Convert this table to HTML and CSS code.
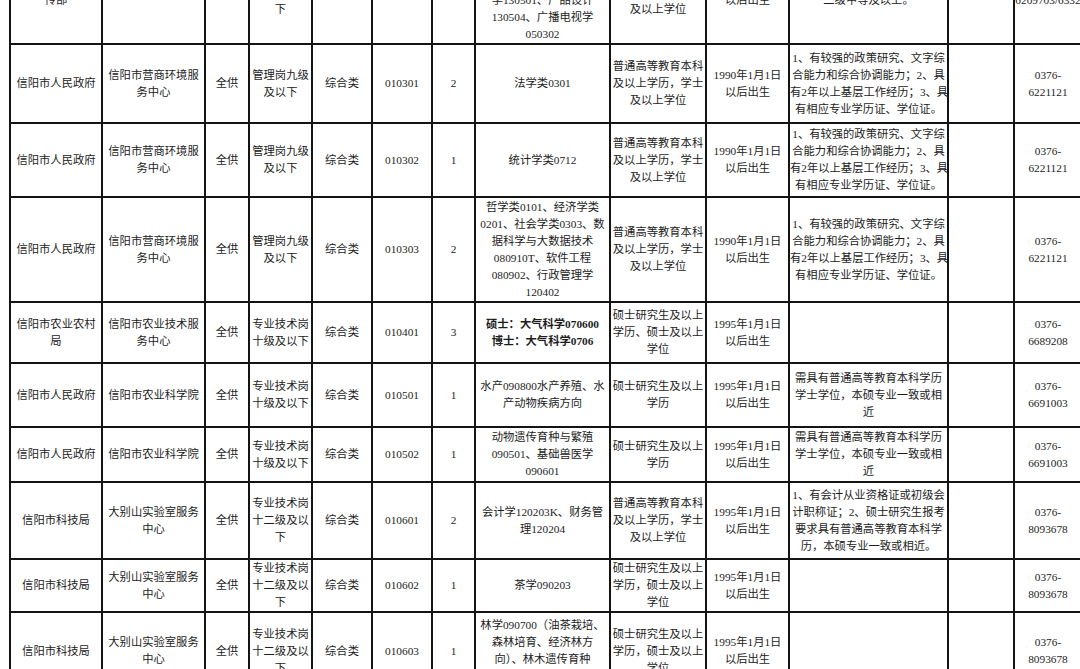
FILE: index.html
```html
<!DOCTYPE html>
<html lang="zh-CN">
<head>
<meta charset="utf-8">
<title>岗位表</title>
<link rel="stylesheet" href="styles.css">
</head>
<body>
<div class="sheet">
<table class="jobs">
<colgroup>
<col class="c1"><col class="c2"><col class="c3"><col class="c4"><col class="c5"><col class="c6"><col class="c7"><col class="c8"><col class="c9"><col class="c10"><col class="c11"><col class="c12"><col class="c13">
</colgroup>
<tbody>
<tr class="r0">
<td>中共信阳市委宣<br>传部</td>
<td></td>
<td></td>
<td>专业技术岗<br>十二级及以<br>下</td>
<td></td>
<td></td>
<td></td>
<td>设计学类1305、艺术<br>设计学130503、视觉<br>传达设计130502、环境<br>学130501、产品设计<br>130504、广播电视学<br>050302</td>
<td>普通高等教育本科<br>及以上学历，学士<br>及以上学位</td>
<td>1990年1月1日<br>以后出生</td>
<td>具有普通话水平测试<br>二级甲等及以上。</td>
<td></td>
<td>0376-<br>6209703/6332</td>
</tr>
<tr class="r1">
<td>信阳市人民政府</td>
<td>信阳市营商环境服<br>务中心</td>
<td>全供</td>
<td>管理岗九级<br>及以下</td>
<td>综合类</td>
<td>010301</td>
<td>2</td>
<td>法学类0301</td>
<td>普通高等教育本科<br>及以上学历，学士<br>及以上学位</td>
<td>1990年1月1日<br>以后出生</td>
<td>1、有较强的政策研究、文字综<br>合能力和综合协调能力；2、具<br>有2年以上基层工作经历；3、具<br>有相应专业学历证、学位证。</td>
<td></td>
<td>0376-<br>6221121</td>
</tr>
<tr class="r2">
<td>信阳市人民政府</td>
<td>信阳市营商环境服<br>务中心</td>
<td>全供</td>
<td>管理岗九级<br>及以下</td>
<td>综合类</td>
<td>010302</td>
<td>1</td>
<td>统计学类0712</td>
<td>普通高等教育本科<br>及以上学历，学士<br>及以上学位</td>
<td>1990年1月1日<br>以后出生</td>
<td>1、有较强的政策研究、文字综<br>合能力和综合协调能力；2、具<br>有2年以上基层工作经历；3、具<br>有相应专业学历证、学位证。</td>
<td></td>
<td>0376-<br>6221121</td>
</tr>
<tr class="r3">
<td>信阳市人民政府</td>
<td>信阳市营商环境服<br>务中心</td>
<td>全供</td>
<td>管理岗九级<br>及以下</td>
<td>综合类</td>
<td>010303</td>
<td>2</td>
<td>哲学类0101、经济学类<br>0201、社会学类0303、数<br>据科学与大数据技术<br>080910T、软件工程<br>080902、行政管理学<br>120402</td>
<td>普通高等教育本科<br>及以上学历，学士<br>及以上学位</td>
<td>1990年1月1日<br>以后出生</td>
<td>1、有较强的政策研究、文字综<br>合能力和综合协调能力；2、具<br>有2年以上基层工作经历；3、具<br>有相应专业学历证、学位证。</td>
<td></td>
<td>0376-<br>6221121</td>
</tr>
<tr class="r4">
<td>信阳市农业农村<br>局</td>
<td>信阳市农业技术服<br>务中心</td>
<td>全供</td>
<td>专业技术岗<br>十级及以下</td>
<td>综合类</td>
<td>010401</td>
<td>3</td>
<td class="strong">硕士：大气科学070600<br>博士：大气科学0706</td>
<td>硕士研究生及以上<br>学历、硕士及以上<br>学位</td>
<td>1995年1月1日<br>以后出生</td>
<td></td>
<td></td>
<td>0376-<br>6689208</td>
</tr>
<tr class="r5">
<td>信阳市人民政府</td>
<td>信阳市农业科学院</td>
<td>全供</td>
<td>专业技术岗<br>十级及以下</td>
<td>综合类</td>
<td>010501</td>
<td>1</td>
<td>水产090800水产养殖、水<br>产动物疾病方向</td>
<td>硕士研究生及以上<br>学历</td>
<td>1995年1月1日<br>以后出生</td>
<td>需具有普通高等教育本科学历<br>学士学位，本硕专业一致或相<br>近</td>
<td></td>
<td>0376-<br>6691003</td>
</tr>
<tr class="r6">
<td>信阳市人民政府</td>
<td>信阳市农业科学院</td>
<td>全供</td>
<td>专业技术岗<br>十级及以下</td>
<td>综合类</td>
<td>010502</td>
<td>1</td>
<td>动物遗传育种与繁殖<br>090501、基础兽医学<br>090601</td>
<td>硕士研究生及以上<br>学历</td>
<td>1995年1月1日<br>以后出生</td>
<td>需具有普通高等教育本科学历<br>学士学位，本硕专业一致或相<br>近</td>
<td></td>
<td>0376-<br>6691003</td>
</tr>
<tr class="r7">
<td>信阳市科技局</td>
<td>大别山实验室服务<br>中心</td>
<td>全供</td>
<td>专业技术岗<br>十二级及以<br>下</td>
<td>综合类</td>
<td>010601</td>
<td>2</td>
<td>会计学120203K、财务管<br>理120204</td>
<td>普通高等教育本科<br>及以上学历，学士<br>及以上学位</td>
<td>1995年1月1日<br>以后出生</td>
<td>1、有会计从业资格证或初级会<br>计职称证；2、硕士研究生报考<br>要求具有普通高等教育本科学<br>历，本硕专业一致或相近。</td>
<td></td>
<td>0376-<br>8093678</td>
</tr>
<tr class="r8">
<td>信阳市科技局</td>
<td>大别山实验室服务<br>中心</td>
<td>全供</td>
<td>专业技术岗<br>十二级及以<br>下</td>
<td>综合类</td>
<td>010602</td>
<td>1</td>
<td>茶学090203</td>
<td>硕士研究生及以上<br>学历，硕士及以上<br>学位</td>
<td>1995年1月1日<br>以后出生</td>
<td></td>
<td></td>
<td>0376-<br>8093678</td>
</tr>
<tr class="r9">
<td>信阳市科技局</td>
<td>大别山实验室服务<br>中心</td>
<td>全供</td>
<td>专业技术岗<br>十二级及以<br>下</td>
<td>综合类</td>
<td>010603</td>
<td>1</td>
<td>林学090700（油茶栽培、<br>森林培育、经济林方<br>向）、林木遗传育种<br>090703</td>
<td>硕士研究生及以上<br>学历，硕士及以上<br>学位</td>
<td>1995年1月1日<br>以后出生</td>
<td></td>
<td></td>
<td>0376-<br>8093678</td>
</tr>
</tbody>
</table>
</div>
</body>
</html>
```

FILE: styles.css
```css
html, body {
  margin: 0;
  padding: 0;
  background: #ffffff;
  overflow: hidden;
}

.sheet {
  width: 1080px;
  height: 669px;
  overflow: hidden;
}

.jobs {
  margin-top: -61px;
  margin-left: 9px;
  border-collapse: collapse;
  table-layout: fixed;
  width: 1072px;
  font-family: "Liberation Serif", "Noto Sans CJK SC", serif;
  font-size: 11.3px;
  line-height: 17px;
  color: #1c1c1c;
}

.jobs td {
  border: 2px solid #141414;
  padding: 0;
  text-align: center;
  vertical-align: middle;
  white-space: nowrap;
  overflow: visible;
}

.jobs .strong {
  font-weight: bold;
}

.c1 { width: 92px; }
.c2 { width: 103px; }
.c3 { width: 44px; }
.c4 { width: 63px; }
.c5 { width: 60px; }
.c6 { width: 60px; }
.c7 { width: 43px; }
.c8 { width: 135px; }
.c9 { width: 96px; }
.c10 { width: 83px; }
.c11 { width: 159px; }
.c12 { width: 66px; }
.c13 { width: 68px; }

.r0 { height: 104px; }
.r1 { height: 79px; }
.r2 { height: 74px; }
.r3 { height: 105px; }
.r4 { height: 61px; }
.r5 { height: 64px; }
.r6 { height: 55px; }
.r7 { height: 77px; }
.r8 { height: 53px; }
.r9 { height: 78px; }
```
